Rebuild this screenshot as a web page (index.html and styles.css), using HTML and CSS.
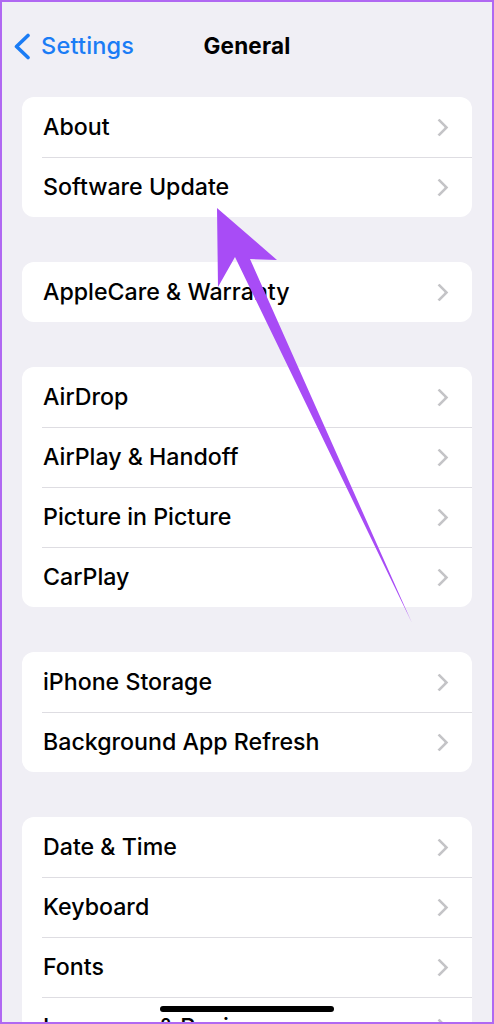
FILE: index.html
```html
<!DOCTYPE html>
<html lang="en">
<head>
    <meta charset="UTF-8">
    <title>General</title>
    <meta name="viewport" content="width=device-width, initial-scale=1.0">
    <link rel="stylesheet" href="styles.css">
</head>
<body>
<div class="frame">
    <div class="nav">
        <a class="back" href="#">
            <svg class="back-icon" width="18" height="27" viewBox="0 0 18 27"><path d="M15 2.5 L3.5 13.5 L15 24.5" fill="none" stroke="#1a7cf5" stroke-width="3.6" stroke-linecap="round" stroke-linejoin="round"/></svg>
            <span>Settings</span>
        </a>
        <div class="title">General</div>
    </div>

    <div class="group">
        <div class="row"><span>About</span><i class="chev"></i></div>
        <div class="row"><span>Software Update</span><i class="chev"></i></div>
    </div>

    <div class="group">
        <div class="row"><span>AppleCare &amp; Warranty</span><i class="chev"></i></div>
    </div>

    <div class="group">
        <div class="row"><span>AirDrop</span><i class="chev"></i></div>
        <div class="row"><span>AirPlay &amp; Handoff</span><i class="chev"></i></div>
        <div class="row"><span>Picture in Picture</span><i class="chev"></i></div>
        <div class="row"><span>CarPlay</span><i class="chev"></i></div>
    </div>

    <div class="group">
        <div class="row"><span>iPhone Storage</span><i class="chev"></i></div>
        <div class="row"><span>Background App Refresh</span><i class="chev"></i></div>
    </div>

    <div class="group">
        <div class="row"><span>Date &amp; Time</span><i class="chev"></i></div>
        <div class="row"><span>Keyboard</span><i class="chev"></i></div>
        <div class="row"><span>Fonts</span><i class="chev"></i></div>
        <div class="row"><span>Language &amp; Region</span><i class="chev"></i></div>
    </div>

    <!-- annotation arrow -->
    <svg class="arrow" width="494" height="1024" viewBox="0 0 494 1024">
        <polygon points="217,208 277,260 250,259 412,623 235,257 218,287" fill="#a84cf6"/>
    </svg>
    <div class="home-bar"></div>
</div>
</body>
</html>
```

FILE: styles.css
```css
body {
    margin: 0;
    font-family: Inter, "Noto Sans", sans-serif;
    background: #fff;
}
.frame {
    position: relative;
    width: 494px;
    height: 1024px;
    box-sizing: border-box;
    border: 2px solid #b068f2;
    background: #f0eff5;
    overflow: hidden;
}
.nav {
    position: relative;
    height: 95px;
    display: flex;
    align-items: flex-start;
}
.back {
    display: flex;
    align-items: center;
    gap: 10px;
    margin: 30px 0 0 11px;
    color: #1a7cf5;
    text-decoration: none;
    font-size: 23.5px;
    font-weight: 500;
    letter-spacing: 0.2px;
}
.back span {
    margin-top: -1px;
}
.title {
    position: absolute;
    left: 0;
    right: 0;
    top: 30px;
    text-align: center;
    font-size: 22.5px;
    font-weight: 700;
    line-height: 27px;
    color: #000;
    letter-spacing: 0.2px;
}
.group {
    margin: 0 20px 45px;
    background: #fff;
    border-radius: 12px;
    overflow: hidden;
}
.row {
    position: relative;
    height: 60px;
    display: flex;
    align-items: center;
    justify-content: space-between;
    padding: 0 22px 0 21px;
    font-size: 23.2px;
    font-weight: 500;
    color: #000;
}
.row + .row::before {
    content: "";
    position: absolute;
    top: 0;
    left: 20px;
    right: 0;
    height: 1px;
    background: #dedde2;
}
.chev {
    width: 10px;
    height: 10px;
    border-right: 3px solid #c4c4c7;
    border-top: 3px solid #c4c4c7;
    transform: rotate(45deg);
    margin-right: 4px;
    border-radius: 1px;
}
.arrow {
    position: absolute;
    left: -2px;
    top: -2px;
}
.home-bar {
    position: absolute;
    left: 158px;
    top: 1004px;
    width: 174px;
    height: 6px;
    border-radius: 3px;
    background: #000;
}
```
